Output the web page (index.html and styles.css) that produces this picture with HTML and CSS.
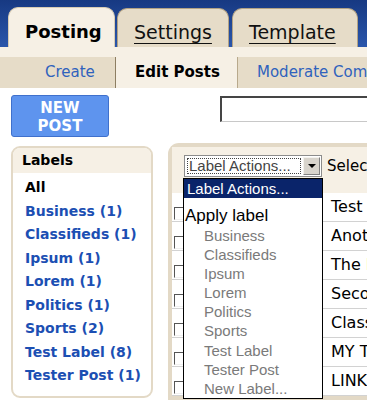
FILE: index.html
```html
<!DOCTYPE html>
<html>
<head>
    <title>Edit Posts</title>
    <link rel="stylesheet" href="styles.css">
</head>
<body>
    <div class="topbar">
        <div class="tab tab-active tab-posting">Posting</div>
        <div class="tab tab-settings"><a>Settings</a></div>
        <div class="tab tab-template"><a>Template</a></div>
    </div>
    <div class="strip"></div>
    <div class="subnav">
        <a class="subtab subtab-first">Create</a>
        <span class="subtab subtab-active">Edit Posts</span>
        <a class="subtab subtab-last">Moderate Comments</a>
    </div>

    <div class="content">
        <div class="toolbar">
            <div class="new-post">NEW<br>POST</div>
            <input class="search" type="text">
        </div>

        <div class="columns">
            <div class="labels">
                <div class="labels-head">Labels</div>
                <div class="labels-list">
                    <div class="label-all">All</div>
                    <a>Business (1)</a>
                    <a>Classifieds (1)</a>
                    <a>Ipsum (1)</a>
                    <a>Lorem (1)</a>
                    <a>Politics (1)</a>
                    <a>Sports (2)</a>
                    <a>Test Label (8)</a>
                    <a>Tester Post (1)</a>
                </div>
            </div>

            <div class="posts">
                <div class="posts-head">
                    <div class="select">
                        <div class="select-text">Label Actions...</div>
                        <div class="select-btn"><span class="arrow"></span></div>
                    </div>
                    <span class="select-all">Select: All, None</span>
                </div>
                <div class="row"><span class="check"></span><span class="title">Test Post</span></div>
                <div class="row"><span class="check"></span><span class="title">Another Post</span></div>
                <div class="row"><span class="check"></span><span class="title">The Lorem Post</span></div>
                <div class="row"><span class="check"></span><span class="title">Second Post</span></div>
                <div class="row"><span class="check"></span><span class="title">Classifieds</span></div>
                <div class="row"><span class="check"></span><span class="title">MY TEST POST</span></div>
                <div class="row"><span class="check"></span><span class="title">LINKS</span></div>

                <div class="dropdown">
                    <div class="opt-active">Label Actions...</div>
                    <div class="optgroup">Apply label</div>
                    <div class="opt">Business</div>
                    <div class="opt">Classifieds</div>
                    <div class="opt">Ipsum</div>
                    <div class="opt">Lorem</div>
                    <div class="opt">Politics</div>
                    <div class="opt">Sports</div>
                    <div class="opt">Test Label</div>
                    <div class="opt">Tester Post</div>
                    <div class="opt">New Label...</div>
                </div>
            </div>
        </div>
    </div>
</body>
</html>
```

FILE: styles.css
```css
html, body {
    margin: 0;
    padding: 0;
    overflow: hidden;
}
body {
    font-family: "DejaVu Sans", Verdana, sans-serif;
    background-color: #ffffff;
    color: #000;
    width: 367px;
}
.topbar {
    height: 47px;
    box-sizing: border-box;
    background: linear-gradient(#173982, #2a56ab);
    display: flex;
    align-items: flex-end;
    padding-left: 8px;
}
.tab {
    box-sizing: border-box;
    flex: none;
    height: 39px;
    padding: 12px 0 0 16px;
    background-color: #e6dcc8;
    border: 1px solid #b3a283;
    border-bottom: none;
    border-radius: 10px 10px 0 0;
    font-size: 19px;
    line-height: 22px;
    white-space: nowrap;
}
.tab a {
    color: #111;
    text-decoration: underline;
    text-underline-offset: 4px;
}
.tab-active {
    height: 40px;
    padding-top: 13px;
    background-color: #f6f0e5;
    border-color: #d8ccb4;
    font-size: 18px;
    font-weight: bold;
}
.tab-posting {
    width: 107px;
}
.tab-settings {
    width: 112px;
    margin-left: 2px;
}
.tab-template {
    width: 126px;
    margin-left: 3px;
}
.strip {
    height: 10px;
    background-color: #f6f0e5;
}
.subnav {
    display: flex;
    height: 31px;
    background-color: #e6dcc8;
    font-size: 15px;
    line-height: 31px;
    white-space: nowrap;
}
.subtab {
    flex: none;
    padding: 0 18px 0 19px;
    color: #2f62bd;
}
.subtab-first {
    width: 116px;
    box-sizing: border-box;
    padding-left: 45px;
    border-right: 1px solid #8d7e62;
}
.subtab-active {
    width: 122px;
    box-sizing: border-box;
    background-color: #f6f0e5;
    color: #000;
    font-weight: bold;
    border-right: 1px solid #b8a98c;
}
.subtab-last {
    padding-left: 19px;
}
.content {
    padding: 7px 0 0 11px;
}
.toolbar {
    display: flex;
    align-items: flex-start;
}
.new-post {
    box-sizing: border-box;
    flex: none;
    width: 98px;
    height: 42px;
    padding-top: 3px;
    background-color: #5e94ee;
    border: 1px solid #3f70cc;
    border-radius: 3px;
    color: #fff;
    font-size: 15px;
    font-weight: bold;
    line-height: 18px;
    text-align: center;
}
.search {
    box-sizing: border-box;
    flex: none;
    margin: 1px 0 0 111px;
    width: 200px;
    height: 26px;
    padding: 0;
    background: #fff;
    border: 1px solid #c8c8c8;
    border-top: 2px solid #454545;
    border-left: 2px solid #454545;
}
.columns {
    display: flex;
    align-items: flex-start;
    margin-top: 6px;
}
.labels {
    box-sizing: border-box;
    flex: none;
    width: 142px;
    height: 252px;
    margin-top: 3px;
    border: 2px solid #e3d9c6;
    border-radius: 9px;
    overflow: hidden;
}
.labels-head {
    height: 25px;
    padding-left: 9px;
    background-color: #f6f0e5;
    font-size: 14px;
    font-weight: bold;
    line-height: 25px;
}
.labels-list {
    display: flex;
    flex-direction: column;
    padding: 3px 0 0 12px;
    font-size: 14px;
    font-weight: bold;
    line-height: 23.5px;
    white-space: nowrap;
}
.labels-list a {
    color: #1c4fb3;
}
.label-all {
    color: #000;
}
.posts {
    position: relative;
    flex: none;
    width: 260px;
    margin-left: 15px;
    border: 4px solid #e3d9c6;
    border-right: none;
    border-radius: 11px 0 0 0;
}
.posts-head {
    display: flex;
    align-items: flex-start;
    height: 46px;
    box-sizing: border-box;
    padding: 8px 0 0 12px;
    background-color: #f6f0e5;
    white-space: nowrap;
}
.select {
    box-sizing: border-box;
    display: flex;
    flex: none;
    width: 138px;
    height: 22px;
    padding: 1px;
    background-color: #fff;
    border: 1px solid #8c8c8c;
}
.select-text {
    flex: 1;
    margin: 1px 2px 1px 1px;
    border: 1px dotted #444;
    padding-left: 1px;
    color: #444;
    font-family: "Liberation Sans", Arial, sans-serif;
    font-size: 15px;
    line-height: 14px;
}
.select-btn {
    box-sizing: border-box;
    width: 17px;
    display: flex;
    align-items: center;
    justify-content: center;
    background-color: #d8d4cc;
    border: 1px solid;
    border-color: #f4f2ee #808080 #808080 #f4f2ee;
}
.arrow {
    width: 0;
    height: 0;
    border-left: 4px solid transparent;
    border-right: 4px solid transparent;
    border-top: 4px solid #000;
}
.select-all {
    margin-left: 5px;
    font-size: 15px;
    line-height: 22px;
}
.row {
    display: flex;
    align-items: flex-start;
    height: 29px;
    box-sizing: border-box;
    border-bottom: 1px solid #d2d2d2;
    white-space: nowrap;
}
.check {
    box-sizing: border-box;
    flex: none;
    width: 13px;
    height: 13px;
    margin: 14px 0 0 2px;
    background-color: #fff;
    border: 1px solid #f0f0f0;
    border-top-color: #555;
    border-left-color: #555;
}
.title {
    margin-left: 144px;
    font-size: 16px;
    line-height: 28px;
}
.dropdown {
    position: absolute;
    left: 11px;
    top: 31px;
    box-sizing: border-box;
    width: 140px;
    height: 221px;
    background-color: #fff;
    border: 1px solid #000;
    font-family: "Liberation Sans", Arial, sans-serif;
    font-size: 15px;
    white-space: nowrap;
}
.opt-active {
    height: 19px;
    padding-left: 3px;
    background-color: #0a246a;
    color: #fff;
    line-height: 19px;
}
.optgroup {
    padding: 8px 0 0 1px;
    font-size: 17px;
    line-height: 20px;
}
.opt {
    padding-left: 20px;
    color: #7a7a7a;
    line-height: 19.1px;
}
```
